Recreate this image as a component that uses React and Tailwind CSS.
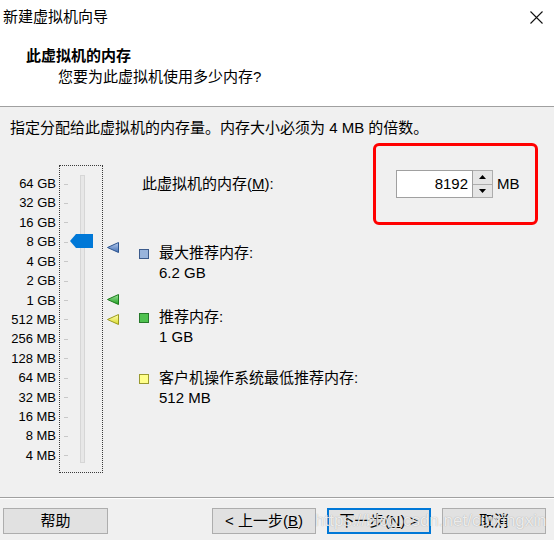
import React from 'react';

const sizes = ['64 GB', '32 GB', '16 GB', '8 GB', '4 GB', '2 GB', '1 GB', '512 MB', '256 MB', '128 MB', '64 MB', '32 MB', '16 MB', '8 MB', '4 MB'];

const Marker = ({ light, dark, edge, top }) => (
  <svg className="absolute left-0" style={{ top }} width="12" height="11" viewBox="0 0 12 11">
    <defs>
      <linearGradient id={`g-${top}`} x1="0" y1="0" x2="0" y2="1">
        <stop offset="0" stopColor={light} />
        <stop offset="1" stopColor={dark} />
      </linearGradient>
    </defs>
    <polygon points="0.5,5.5 11.5,0.5 11.5,10.5" fill={`url(#g-${top})`} stroke={edge} strokeWidth="1" strokeLinejoin="round" />
  </svg>
);

const Legend = ({ fill, edge, title, value, className }) => (
  <div className={`flex items-start ${className}`}>
    <div className={`mt-[6px] w-[10px] h-[10px] border ${fill} ${edge}`} />
    <div className="ml-[10px] leading-[20px]">
      <div>{title}</div>
      <div>{value}</div>
    </div>
  </div>
);

const Button = ({ children, primary, className = '' }) => (
  <div
    className={`h-[26px] flex items-center justify-center bg-[#e1e1e1] ${
      primary ? 'border-2 border-[#0078d7]' : 'border border-[#adadad]'
    } ${className}`}
  >
    {children}
  </div>
);

export default function App() {
  return (
    <div className="relative w-[554px] h-[540px] flex flex-col bg-[#f0f0f0] text-black text-[15px] font-['Liberation_Sans','Noto_Sans_CJK_SC',sans-serif] overflow-hidden">
      {/* Header */}
      <div className="h-[107px] bg-white border-b border-[#a0a0a0]">
        <div className="h-[34px] flex items-center justify-between pl-[3px] pr-[11px] leading-[20px]">
          <span>新建虚拟机向导</span>
          <svg width="13" height="13" viewBox="0 0 13 13">
            <path d="M0.5 0.5 L12.5 12.5 M12.5 0.5 L0.5 12.5" stroke="#111" strokeWidth="1.1" />
          </svg>
        </div>
        <div className="mt-[12px] pl-[26px] leading-[20px] font-bold">此虚拟机的内存</div>
        <div className="mt-[1px] pl-[58px] leading-[20px]">您要为此虚拟机使用多少内存?</div>
      </div>

      {/* Body */}
      <div className="flex-1 pt-[11px]">
        <div className="pl-[10px] leading-[20px]">指定分配给此虚拟机的内存量。内存大小必须为 4 MB 的倍数。</div>

        <div className="flex items-start">
          {/* Slider */}
          <div className="mt-[27px] flex items-start">
            <div className="w-[56px] pt-[9px] text-right text-[13px]">
              {sizes.map((s) => (
                <div key={s} className="h-[19.43px] leading-[19.43px]">{s}</div>
              ))}
            </div>
            <div className="relative ml-[3px] w-[44px] h-[308px] border border-dotted border-[#3a3a3a] flex items-start">
              <div className="ml-[4px] pt-[8.3px] w-[4px]">
                {sizes.map((s) => (
                  <div key={s} className="h-[19.43px] flex items-center">
                    <div className="w-[4px] h-px bg-[#c8c8c8]" />
                  </div>
                ))}
              </div>
              <div className="ml-[12px] mt-[9px] w-[5px] h-[288px] bg-[#e7e7e7] border border-[#d6d6d6]" />
              <svg className="absolute left-[10px] top-[68px]" width="23" height="14" viewBox="0 0 23 14">
                <polygon points="0,7 6,0 23,0 23,14 6,14" fill="#0078d7" />
              </svg>
            </div>
            <div className="relative ml-[4px] w-[12px] h-[308px]">
              <Marker top={77} light="#b9cdee" dark="#3f6db3" edge="#2c548f" />
              <Marker top={129} light="#9be39b" dark="#1f9e1f" edge="#1c7a1c" />
              <Marker top={149} light="#ffffb0" dark="#d9d92a" edge="#9a9a1e" />
            </div>
          </div>

          {/* Right column */}
          <div className="flex-1 ml-[20px] mt-[5px] pr-[16px]">
            <div className="h-[82px] flex items-center justify-between">
              <span className="pl-[3px] leading-[20px]">
                此虚拟机的内存(<span className="underline">M</span>):
              </span>
              <div className="w-[165px] h-[82px] border-[3px] border-[#ff0000] rounded-[6px] flex items-center pl-[20px]">
                <div className="w-[77px] h-[28px] bg-white border border-[#a0a0a0] text-right pr-[4px] leading-[26px]">8192</div>
                <div className="w-[20px] h-[28px] flex flex-col border-y border-r border-[#adadad]">
                  <div className="flex-1 flex items-center justify-center bg-[#e5e5e5] border-b border-[#adadad]">
                    <svg width="7" height="4" viewBox="0 0 7 4"><polygon points="3.5,0 7,4 0,4" fill="#000" /></svg>
                  </div>
                  <div className="flex-1 flex items-center justify-center bg-[#e5e5e5]">
                    <svg width="7" height="4" viewBox="0 0 7 4"><polygon points="0,0 7,0 3.5,4" fill="#000" /></svg>
                  </div>
                </div>
                <span className="ml-[4px] leading-[20px]">MB</span>
              </div>
            </div>

            <Legend className="mt-[18px]" fill="bg-[#98b4dc]" edge="border-[#3b5b8c]" title="最大推荐内存:" value="6.2 GB" />
            <Legend className="mt-[24px]" fill="bg-[#4fc14f]" edge="border-[#26782a]" title="推荐内存:" value="1 GB" />
            <Legend className="mt-[21px]" fill="bg-[#ffff8a]" edge="border-[#9a9a30]" title="客户机操作系统最低推荐内存:" value="512 MB" />
          </div>
        </div>
      </div>

      {/* Footer */}
      <div className="h-px bg-[#a0a0a0]" />
      <div className="h-px bg-white" />
      <div className="flex items-center pt-[9px] pb-[6px] pl-[3px] pr-[8px]">
        <Button className="w-[105px]">帮助</Button>
        <Button className="ml-auto w-[104px]">
          &lt; 上一步(<span className="underline">B</span>)
        </Button>
        <Button primary className="ml-[11px] w-[104px]">
          下一步(<span className="underline">N</span>) &gt;
        </Button>
        <Button className="ml-[11px] w-[104px]">取消</Button>
      </div>

      {/* CSDN watermark */}
      <div className="absolute left-[315px] top-[511px] leading-[20px] text-[17px] text-white/80 [text-shadow:0_0_1px_rgba(0,0,0,0.35)] pointer-events-none">
        https://blog.csdn.net/cuixingxin
      </div>
    </div>
  );
}
